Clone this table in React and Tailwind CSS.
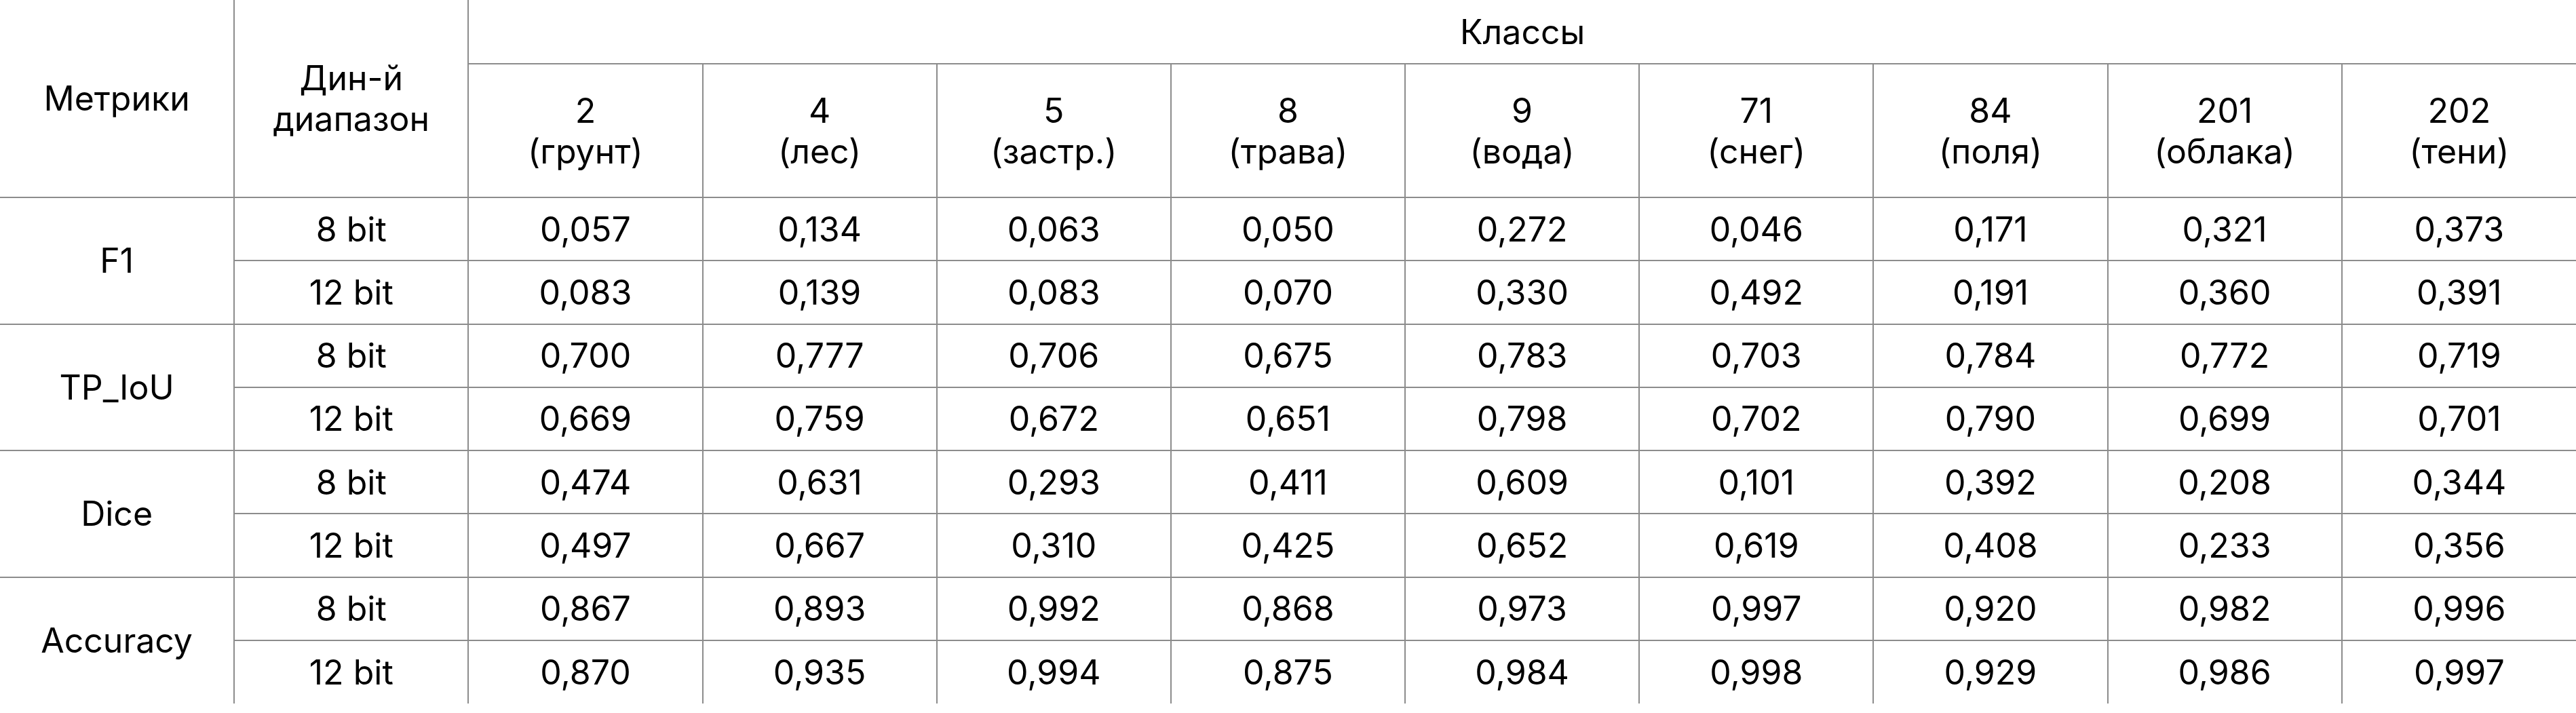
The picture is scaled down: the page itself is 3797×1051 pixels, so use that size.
const classes = [
  ['2', '(грунт)'],
  ['4', '(лес)'],
  ['5', '(застр.)'],
  ['8', '(трава)'],
  ['9', '(вода)'],
  ['71', '(снег)'],
  ['84', '(поля)'],
  ['201', '(облака)'],
  ['202', '(тени)'],
]

const metrics = [
  {
    name: 'F1',
    rows: [
      ['8 bit', ['0,057', '0,134', '0,063', '0,050', '0,272', '0,046', '0,171', '0,321', '0,373']],
      ['12 bit', ['0,083', '0,139', '0,083', '0,070', '0,330', '0,492', '0,191', '0,360', '0,391']],
    ],
  },
  {
    name: 'TP_IoU',
    rows: [
      ['8 bit', ['0,700', '0,777', '0,706', '0,675', '0,783', '0,703', '0,784', '0,772', '0,719']],
      ['12 bit', ['0,669', '0,759', '0,672', '0,651', '0,798', '0,702', '0,790', '0,699', '0,701']],
    ],
  },
  {
    name: 'Dice',
    rows: [
      ['8 bit', ['0,474', '0,631', '0,293', '0,411', '0,609', '0,101', '0,392', '0,208', '0,344']],
      ['12 bit', ['0,497', '0,667', '0,310', '0,425', '0,652', '0,619', '0,408', '0,233', '0,356']],
    ],
  },
  {
    name: 'Accuracy',
    rows: [
      ['8 bit', ['0,867', '0,893', '0,992', '0,868', '0,973', '0,997', '0,920', '0,982', '0,996']],
      ['12 bit', ['0,870', '0,935', '0,994', '0,875', '0,984', '0,998', '0,929', '0,986', '0,997']],
    ],
  },
]

// borders only between cells, outer edge hidden
const cell = 'border-2 border-[#8c8c8c] text-center align-middle p-0 font-normal'

export default function App() {
  return (
    <div className="w-[3797px] bg-white text-black font-['Inter',sans-serif] text-[50px] leading-[60px]">
      <table className="w-full table-fixed border-collapse border-hidden">
        <thead>
          <tr className="h-[94px]">
            <th rowSpan={2} className={cell}>Метрики</th>
            <th rowSpan={2} className={cell}>
              Дин-й
              <br />
              диапазон
            </th>
            <th colSpan={9} className={cell}>Классы</th>
          </tr>
          <tr className="h-[197px]">
            {classes.map(([id, label]) => (
              <th key={id} className={cell}>
                {id}
                <br />
                {label}
              </th>
            ))}
          </tr>
        </thead>
        <tbody>
          {metrics.map((m) =>
            m.rows.map(([depth, vals], i) => (
              <tr key={m.name + depth} className="h-[93.25px]">
                {i === 0 && (
                  <td rowSpan={2} className={cell}>{m.name}</td>
                )}
                <td className={cell}>{depth}</td>
                {vals.map((v, j) => (
                  <td key={j} className={cell}>{v}</td>
                ))}
              </tr>
            ))
          )}
        </tbody>
      </table>
    </div>
  )
}
